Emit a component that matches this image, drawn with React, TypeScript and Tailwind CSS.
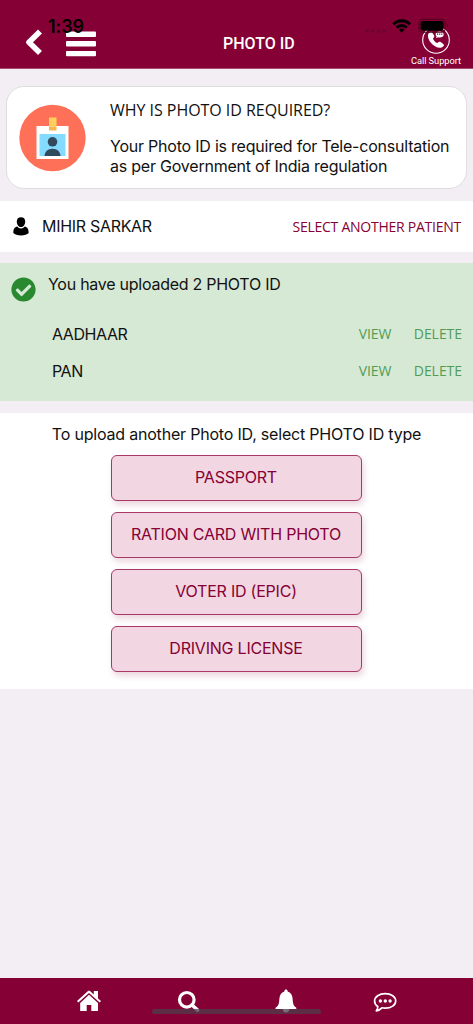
import { FaCheckCircle } from "react-icons/fa";

const uploadedIds = ["AADHAAR", "PAN"];
const idTypes = ["PASSPORT", "RATION CARD WITH PHOTO", "VOTER ID (EPIC)", "DRIVING LICENSE"];

function StatusBar() {
  return (
    <div className="pointer-events-none absolute inset-x-0 top-0 z-10 h-9 text-black">
      <span className="absolute left-[48px] top-[16px] font-['Inter',sans-serif] text-[18px] font-semibold leading-[22px] tracking-[-0.1px]">1:39</span>
      <svg className="absolute left-[364px] top-[28px]" width="22" height="6" viewBox="0 0 22 6" fill="#6c0430">
        <circle cx="2.7" cy="3" r="1.8" />
        <circle cx="8.5" cy="3" r="1.8" />
        <circle cx="14.3" cy="3" r="1.8" />
        <circle cx="20" cy="3" r="1.8" />
      </svg>
      <svg className="absolute left-[392px] top-[18px]" width="20" height="16" viewBox="0 0 20 16" fill="none" stroke="currentColor" strokeWidth="2.8">
        <path d="M1.3 6.2a12 12 0 0 1 16.8 0" />
        <path d="M4.6 9.6a7.2 7.2 0 0 1 10.2 0" />
        <path d="M9.7 14.8 6.8 11.8a4.2 4.2 0 0 1 5.8 0z" fill="currentColor" stroke="none" />
      </svg>
      <svg className="absolute left-[418px] top-[18px]" width="32" height="16" viewBox="0 0 32 16">
        <rect x="0.9" y="1.2" width="26.4" height="13" rx="4" fill="none" stroke="#53021f" strokeWidth="1.1" />
        <rect x="2.6" y="3" width="23" height="9.7" rx="2.4" />
        <path d="M29 5.5v4.2a2.3 2.3 0 0 0 0-4.2z" fill="#53021f" />
      </svg>
    </div>
  );
}

function CallIcon() {
  return (
    <svg width="30" height="30" viewBox="0 0 30 30" fill="none">
      <circle cx="15" cy="15" r="13.3" stroke="white" strokeWidth="1.1" />
      <path
        d="M9.2 7.1c.6-.5 1.5-.4 2 .3l1.9 3.1c.4.7.3 1.4-.2 2l-1 .9c.8 2.1 2.4 3.8 4.5 4.7l1.2-1c.6-.5 1.4-.5 2-.1l2.7 1.9c.7.5.8 1.4.3 2-1 1.3-2.6 2.1-4.5 1.8C12 21.7 6.6 15.5 7 10.2c.1-1.3 1-2.3 2.2-3.1z"
        fill="white"
      />
      <path d="M18.6 6.4c2.5 0 4.1 1.2 4.1 3.1s-1.6 3-4.1 3c-.6 0-1.1-.1-1.5-.2l-2 1 .5-1.8c-.7-.5-1-1.2-1-2 0-1.9 1.6-3.1 4-3.1z" fill="white" />
      <path d="M16 9.2h1.2M18.1 9.2h1.2M20.2 9.2h1.2" stroke="#850034" strokeWidth="1.2" />
    </svg>
  );
}

function Header() {
  return (
    <header className="flex h-[69px] shrink-0 items-start border-b border-[#a54a70] bg-[#850034] text-white">
      <button className="ml-[25px] mt-[29px] w-[18px]">
        <svg width="18" height="27" viewBox="0 0 18 27" fill="none" stroke="white" strokeWidth="5.6" strokeLinejoin="round">
          <path d="M15 2.5 4 13.3l11 10.8" />
        </svg>
      </button>
      <button className="ml-[23px] mt-[31px] w-[30px]">
        <svg width="30" height="26" viewBox="0 0 30 26" fill="white">
          <rect width="30" height="5.4" y="0.5" rx="1" />
          <rect width="30" height="5.4" y="10.1" rx="1" />
          <rect width="30" height="5.4" y="19.9" rx="1" />
        </svg>
      </button>
      <h1 className="ml-[127px] mt-[34px] w-[72px] whitespace-nowrap font-['Roboto',sans-serif] text-[16px] font-medium leading-5 tracking-normal">PHOTO ID</h1>
      <button className="ml-auto mr-[11px] mt-[25px] flex w-[52px] flex-col items-center">
        <CallIcon />
        <span className="whitespace-nowrap font-['Roboto',sans-serif] text-[9.3px] leading-3 tracking-[-0.05px]">Call Support</span>
      </button>
    </header>
  );
}

function PhotoIdIcon() {
  return (
    <svg className="shrink-0" width="67" height="68" viewBox="0 -0.5 67 68">
      <circle cx="33.5" cy="33.5" r="33.2" fill="#ff7058" />
      <rect x="17.5" y="21.5" width="32" height="33" fill="white" />
      <rect x="20.5" y="29.5" width="26" height="22" fill="#84dbff" />
      <rect x="30" y="13" width="7.5" height="9" fill="#ffd15c" />
      <rect x="30" y="22" width="7.5" height="4" fill="#f8b64c" />
      <circle cx="33.5" cy="37.3" r="4.8" fill="#324a5e" />
      <path d="M25.5 51.5c.2-4.2 3-7.3 8-7.3s7.8 3.1 8 7.3z" fill="#324a5e" />
    </svg>
  );
}

function TabBar() {
  return (
    <nav className="relative flex h-[46px] shrink-0 items-start bg-[#850034] text-white">
      <svg className="ml-[77px] mt-[12px]" width="24" height="22" viewBox="0 0 24 22" fill="white">
        <path d="M16.8 1H21v7.4l3 2.7-1.3 1.5L12 2.9 1.3 12.6 0 11.1 11 1c.6-.5 1.4-.5 2 0l3.8 3.4z" />
        <path d="M12 4.8 21 13v8h-6.7v-6H9.7v6H3.2v-8z" />
      </svg>
      <svg className="ml-[76px] mt-[12px]" width="23" height="23" viewBox="0 0 23 23" fill="none" stroke="white">
        <circle cx="9.8" cy="9.8" r="7.3" strokeWidth="3.2" />
        <path d="m15 15 5.5 5" strokeWidth="3.6" strokeLinecap="round" />
      </svg>
      <svg className="ml-[75px] mt-[11px]" width="22" height="24" viewBox="0 0 22 24" fill="white">
        <path d="M11 .5c.9 0 1.6.7 1.6 1.5v.4c3.1.9 4.8 3.7 5 7 .3 5.2.9 7.4 3.7 9.3V20H.5v-1.3c3-1.9 3.6-4.1 3.9-9.3.2-3.3 1.9-6.1 5-7V2c0-.8.7-1.5 1.6-1.5z" />
        <path d="M7.6 20h6.8c-.3 2.4-1.6 3.5-3.4 3.5s-3.1-1.1-3.4-3.5z" />
      </svg>
      <svg className="ml-[76px] mt-[14px]" width="24" height="21" viewBox="0 0 24 21" fill="none">
        <path d="M12.2 1.6c6 0 10.5 3.2 10.5 7.3s-4.5 7.3-10.5 7.3c-1.2 0-2.3-.1-3.3-.4-1.5 1.6-3.3 2.7-5.6 3 .9-1.1 1.5-2.5 1.5-4.3-2-1.3-3.2-3.3-3.2-5.6 0-4.1 4.6-7.3 10.6-7.3z" stroke="white" strokeWidth="1.7" strokeLinejoin="round" />
        <circle cx="7.4" cy="9" r="1.7" fill="white" />
        <circle cx="12.3" cy="9" r="1.7" fill="white" />
        <circle cx="17.1" cy="9" r="1.7" fill="white" />
      </svg>
      {/* home indicator */}
      <div className="absolute left-[152px] top-[31px] h-[5px] w-[169px] rounded-full bg-[#4d3e4b]/75" />
    </nav>
  );
}

export default function App() {
  return (
    <div className="relative flex h-[1024px] w-[473px] flex-col overflow-hidden bg-[#f3eef4] font-['Inter',sans-serif] text-[16px] tracking-[-0.22px] text-[#111]">
      <StatusBar />
      <Header />

      <section className="mx-[6px] mt-[17px] flex h-[103px] shrink-0 rounded-[18px] border border-[#dedede] bg-white pl-[12px] pt-[17px]">
        <PhotoIdIcon />
        <div className="ml-[24px] whitespace-nowrap">
          <h2 className="mt-[-4px] font-['Open_Sans',sans-serif] text-[16px] leading-5 tracking-[-0.04px]">WHY IS PHOTO ID REQUIRED?</h2>
          <p className="mt-[16px] leading-[20.4px]">
            Your Photo ID is required for Tele-consultation
            <br />
            as per Government of India regulation
          </p>
        </div>
      </section>

      <section className="mt-[12px] flex h-[51px] shrink-0 items-center bg-white pl-[13px] pr-[12px]">
        <svg width="16" height="19" viewBox="0 0 16 19">
          <path d="M8 .2c2.6 0 4.2 1.5 4.2 4.3 0 3-1.7 5.6-4.2 5.6S3.8 7.5 3.8 4.5C3.8 1.7 5.4.2 8 .2z" />
          <path d="M4.3 9.5c1 1.3 2.2 1.9 3.7 1.9s2.7-.6 3.7-1.9c2.7.7 4 2.4 4 6.6-1.6 1.6-4.2 2.3-7.7 2.3S1.9 17.7.3 16.1c0-4.2 1.3-5.9 4-6.6z" />
        </svg>
        <span className="ml-[13px] whitespace-nowrap pb-[2px] tracking-[-0.3px]">MIHIR SARKAR</span>
        <button className="ml-auto whitespace-nowrap font-['Open_Sans',sans-serif] text-[14px] tracking-[-0.25px] text-[#850034]">SELECT ANOTHER PATIENT</button>
      </section>

      <section className="mt-[11px] h-[138px] shrink-0 bg-[#d6e9d4] px-[11px] pt-[11px]">
        <div className="flex h-[41px] items-start">
          <FaCheckCircle className="mt-[3px] size-[25px] text-[#29892f]" />
          <p className="ml-[12px] whitespace-nowrap leading-[21px] tracking-[-0.26px]">You have uploaded 2 PHOTO ID</p>
        </div>
        {uploadedIds.map((name) => (
          <div key={name} className="flex h-[37px] items-center pl-[41px]">
            <span className="tracking-[-0.42px]">{name}</span>
            <button className="ml-auto font-['Open_Sans',sans-serif] text-[14px] tracking-[-0.1px] text-[#529c54]">VIEW</button>
            <button className="ml-[22.5px] font-['Open_Sans',sans-serif] text-[14px] tracking-[-0.05px] text-[#529c54]">DELETE</button>
          </div>
        ))}
      </section>

      <section className="mt-[12px] flex h-[276px] shrink-0 flex-col items-center bg-white pt-[11px]">
        <p className="whitespace-nowrap leading-[21px] tracking-[-0.2px]">To upload another Photo ID, select PHOTO ID type</p>
        <div className="mt-[10px] flex flex-col gap-[11px]">
          {idTypes.map((type) => (
            <button key={type} className="h-[46px] w-[251px] rounded-[6px] border border-[#a83866] bg-[#f2d6e1] pb-[2px] pr-px text-[#850034] shadow-[2px_4px_6px_rgba(133,0,52,0.16)]">
              {type}
            </button>
          ))}
        </div>
      </section>

      <div className="flex-1" />
      <TabBar />
    </div>
  );
}
